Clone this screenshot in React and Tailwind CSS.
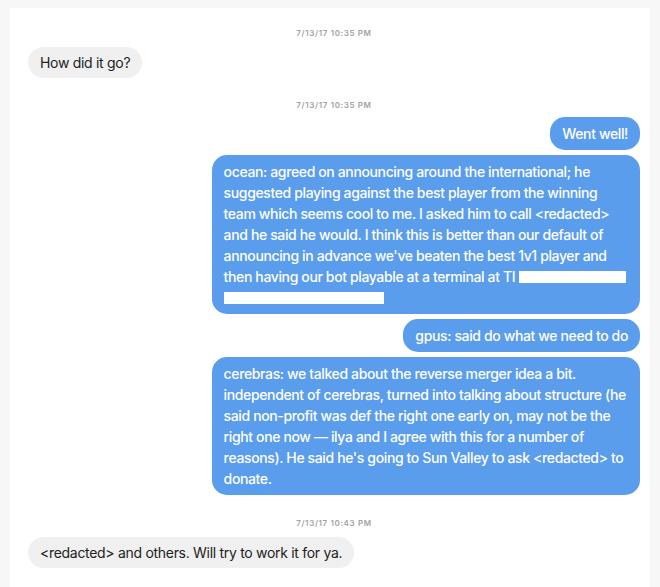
import React from "react";

const Stamp = ({ children }) => (
  <div className="flex justify-center text-[8px] font-semibold tracking-[0.08em] text-[#a3a3a3] leading-none">
    {children}
  </div>
);

const Left = ({ children }) => (
  <div className="flex justify-start">
    <div className="max-w-[70%] rounded-[16px] bg-[#f0f0f0] px-3 py-[5px] text-[14px] leading-[21px] tracking-[-0.3px] text-[#222]">
      {children}
    </div>
  </div>
);

const Right = ({ children }) => (
  <div className="flex justify-end">
    <div className="max-w-[70%] rounded-[15px] bg-[#5a9ded] px-3 py-[6px] text-[14px] leading-[21px] tracking-[-0.37px] text-white font-medium">
      {children}
    </div>
  </div>
);

export default function App() {
  return (
    <div
      className="min-h-[587px] w-[660px] overflow-hidden bg-[#f7f7f7] pl-[10px] pt-[8px]"
      style={{ fontFamily: "Inter, 'Liberation Sans', sans-serif" }}
    >
      <div className="min-h-[600px] w-[640px] bg-white pl-[18px] pr-[10px] pt-[21px]">
        <div className="w-[612px] flex flex-col">
          <Stamp>7/13/17 10:35 PM</Stamp>
          <div className="mt-[10px]">
            <Left>How did it go?</Left>
          </div>
          <div className="mt-[23px]">
            <Stamp>7/13/17 10:35 PM</Stamp>
          </div>
          <div className="mt-[8px] flex flex-col gap-[5px]">
            <Right>Went well!</Right>
            <Right>
              ocean: agreed on announcing around the international; he suggested playing against the best player from the winning team which seems cool to me. I asked him to call &lt;redacted&gt; and he said he would. I think this is better than our default of announcing in advance we've beaten the best 1v1 player and then having our bot playable at a terminal at TI{" "}
              <span className="inline-block h-[12px] w-[107px] bg-white align-[-1px]"></span>
              <br />
              <span className="inline-block h-[12px] w-[160px] bg-white align-[-1px]"></span>
            </Right>
            <Right>gpus: said do what we need to do</Right>
            <Right>
              cerebras: we talked about the reverse merger idea a bit. independent of cerebras, turned into talking about structure (he said non-profit was def the right one early on, may not be the right one now — ilya and I agree with this for a number of reasons). He said he's going to Sun Valley to ask &lt;redacted&gt; to donate.
            </Right>
          </div>
          <div className="mt-[24px]">
            <Stamp>7/13/17 10:43 PM</Stamp>
          </div>
          <div className="mt-[10px]">
            <Left>&lt;redacted&gt; and others. Will try to work it for ya.</Left>
          </div>
        </div>
      </div>
    </div>
  );
}
